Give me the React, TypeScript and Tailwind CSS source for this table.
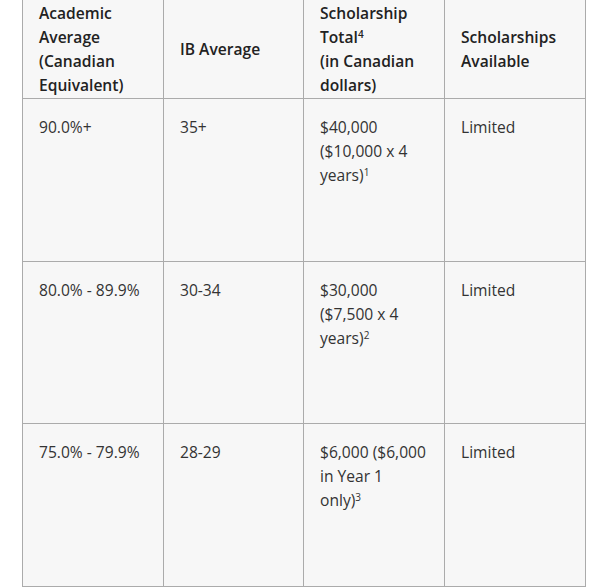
import React from "react";

type Row = {
  average: string;
  ib: string;
  total: React.ReactNode;
  available: string;
};

const rows: Row[] = [
  {
    average: "90.0%+",
    ib: "35+",
    total: (
      <>
        $40,000 ($10,000 x 4 years)<sup className="text-[10px]">1</sup>
      </>
    ),
    available: "Limited",
  },
  {
    average: "80.0% - 89.9%",
    ib: "30-34",
    total: (
      <>
        $30,000 ($7,500 x 4 years)<sup className="text-[10px]">2</sup>
      </>
    ),
    available: "Limited",
  },
  {
    average: "75.0% - 79.9%",
    ib: "28-29",
    total: (
      <>
        $6,000 ($6,000 in Year 1 only)<sup className="text-[10px]">3</sup>
      </>
    ),
    available: "Limited",
  },
];

export default function App() {
  return (
    <div
      className="w-[600px] h-[588px] overflow-hidden bg-white"
      style={{ fontFamily: '"Open Sans", "Liberation Sans", sans-serif' }}
    >
      <table className="ml-[22px] mt-[-16px] w-[563px] table-fixed border-collapse text-[15.6px] leading-6">
        <colgroup>
          <col className="w-[141px]" />
          <col className="w-[140px]" />
          <col className="w-[141px]" />
          <col className="w-[141px]" />
        </colgroup>
        <thead>
          <tr className="bg-[#f7f7f7]">
            <Th>Academic Average (Canadian Equivalent)</Th>
            <Th>IB Average</Th>
            <Th>
              Scholarship Total<sup className="text-[10px]">4</sup>
              <br />
              (in Canadian dollars)
            </Th>
            <Th>Scholarships Available</Th>
          </tr>
        </thead>
        <tbody>
          {rows.map((row) => (
            <tr key={row.average} className="bg-[#f7f7f7]">
              <Td>{row.average}</Td>
              <Td>{row.ib}</Td>
              <Td>{row.total}</Td>
              <Td>{row.available}</Td>
            </tr>
          ))}
        </tbody>
      </table>
    </div>
  );
}

function Th({ children }: { children: React.ReactNode }) {
  return (
    <th className="border border-[#ababab] px-4 pt-4 pb-px text-left align-middle font-semibold text-[#222]">
      {children}
    </th>
  );
}

function Td({ children }: { children: React.ReactNode }) {
  return (
    <td className="h-[162.5px] border border-[#ababab] px-4 pt-4 text-left align-top font-normal text-[#333]">
      {children}
    </td>
  );
}
